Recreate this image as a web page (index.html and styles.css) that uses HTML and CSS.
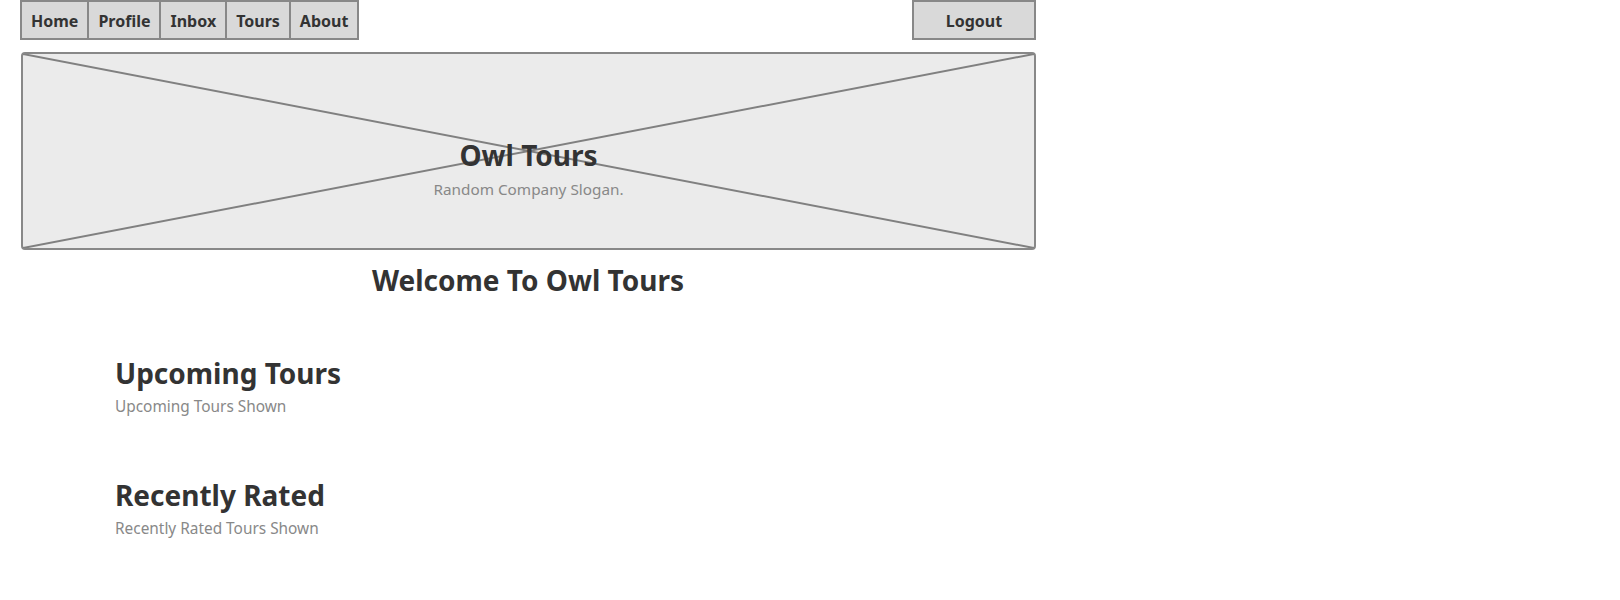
FILE: index.html
```html
<!DOCTYPE html>
<html>
<head>
<meta charset="utf-8">
<link rel="stylesheet" href="styles.css">
</head>
<body>
<div class="page">
  <header class="topbar">
    <nav class="nav">
      <a class="nav-item">Home</a>
      <a class="nav-item">Profile</a>
      <a class="nav-item">Inbox</a>
      <a class="nav-item">Tours</a>
      <a class="nav-item">About</a>
    </nav>
    <a class="logout">Logout</a>
  </header>
  <section class="hero">
    <svg class="hero-x" viewBox="0 0 100 100" preserveAspectRatio="none">
      <line x1="0" y1="0" x2="100" y2="100" vector-effect="non-scaling-stroke"/>
      <line x1="100" y1="0" x2="0" y2="100" vector-effect="non-scaling-stroke"/>
    </svg>
    <h1 class="hero-title">Owl Tours</h1>
    <p class="hero-slogan">Random Company Slogan.</p>
  </section>
  <h2 class="welcome">Welcome To Owl Tours</h2>
  <section class="block block-first">
    <h3 class="block-title">Upcoming Tours</h3>
    <p class="block-sub">Upcoming Tours Shown</p>
  </section>
  <section class="block">
    <h3 class="block-title">Recently Rated</h3>
    <p class="block-sub">Recently Rated Tours Shown</p>
  </section>
</div>
</body>
</html>
```
FILE: styles.css
```css
* { box-sizing: border-box; }
html, body { margin: 0; padding: 0; background: #fff; }
body { font-family: "Noto Sans", sans-serif; color: #333; }
.page { width: 1036px; padding-left: 20px; }
.topbar { display: flex; justify-content: space-between; align-items: flex-start; height: 52px; }
.nav { display: flex; border: 2px solid #888; background: #d9d9d9; height: 40px; }
.nav-item { display: flex; align-items: center; justify-content: center; padding: 2px 9px 0; font-weight: bold; font-size: 16px; color: #333; border-left: 2px solid #888; }
.nav-item:first-child { border-left: none; }
.logout { display: flex; align-items: center; justify-content: center; width: 124px; height: 40px; padding-top: 2px; border: 2px solid #888; background: #d9d9d9; font-weight: bold; font-size: 16px; color: #333; }
.hero { position: relative; margin-left: 1px; height: 198px; border: 2px solid #888; border-radius: 4px; background: #ebebeb; text-align: center; padding-top: 84px; }
.hero-x { position: absolute; left: 0; top: 0; width: 100%; height: 100%; }
.hero-x line { stroke: #808080; stroke-width: 2; }
.hero-title { position: relative; margin: 0; font-size: 28px; font-weight: bold; line-height: 34px; color: #333; }
.hero-slogan { position: relative; margin: 8px 0 0; font-size: 15.3px; color: #888; line-height: 18px; }
.welcome { margin: 13px 0 0; text-align: center; font-size: 28px; font-weight: bold; line-height: 34px; }
.block { padding-left: 95px; margin-top: 62px; }
.block-first { margin-top: 60px; }
.block-title { margin: 0; font-size: 28px; font-weight: bold; line-height: 32px; }
.block-sub { margin: 8px 0 0; font-size: 15.4px; color: #888; line-height: 20px; }
```
